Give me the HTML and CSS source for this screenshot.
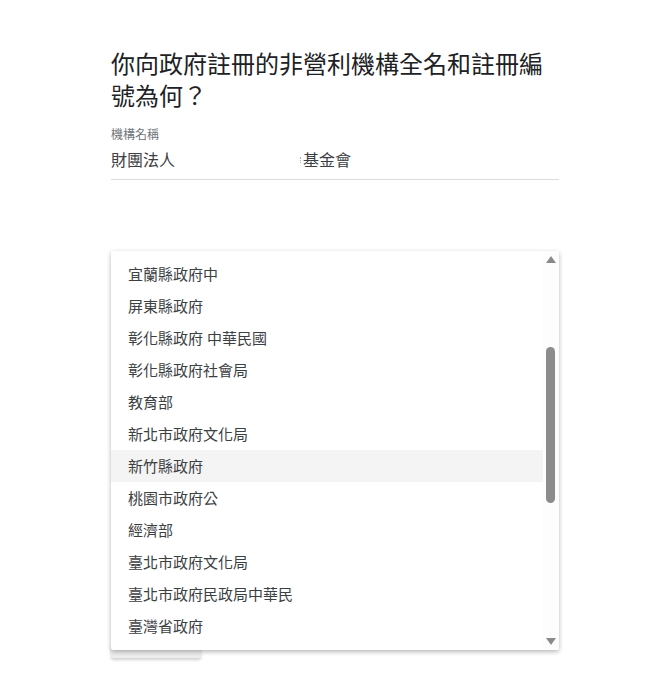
FILE: index.html
```html
<!DOCTYPE html>
<html lang="zh-Hant">
<head>
<meta charset="utf-8">
<link rel="stylesheet" href="styles.css">
</head>
<body>
<main class="page">
  <h1 class="title">你向政府註冊的非營利機構全名和註冊編號為何？</h1>
  <div class="field">
    <label class="label">機構名稱</label>
    <div class="input">
      <span class="part">財團法人</span>
      <span class="caret"></span>
      <span class="part">基金會</span>
    </div>
  </div>
  <div class="peek"></div>
  <div class="listbox">
    <ul class="options">
      <li class="opt">宜蘭縣政府中</li>
      <li class="opt">屏東縣政府</li>
      <li class="opt">彰化縣政府 中華民國</li>
      <li class="opt">彰化縣政府社會局</li>
      <li class="opt">教育部</li>
      <li class="opt">新北市政府文化局</li>
      <li class="opt active">新竹縣政府</li>
      <li class="opt">桃園市政府公</li>
      <li class="opt">經濟部</li>
      <li class="opt">臺北市政府文化局</li>
      <li class="opt">臺北市政府民政局中華民</li>
      <li class="opt">臺灣省政府</li>
    </ul>
    <div class="scrollbar">
      <span class="arrow up"></span>
      <span class="thumb"></span>
      <span class="arrow down"></span>
    </div>
  </div>
</main>
</body>
</html>
```
FILE: styles.css
```css
* { box-sizing: border-box; }
html, body { margin: 0; padding: 0; background: #fff; }
body {
  font-family: "Noto Sans", "Noto Sans CJK TC", sans-serif;
  color: #202124;
}
.page {
  position: relative;
  width: 652px;
  height: 692px;
  padding: 48px 0 0 111px;
}
.title {
  margin: 0;
  width: 448px;
  font-size: 24px;
  line-height: 32px;
  font-weight: 400;
  color: #202124;
}
.field {
  width: 448px;
  margin-top: 15px;
}
.label {
  display: block;
  font-size: 12px;
  line-height: 16px;
  color: #70757a;
}
.input {
  display: flex;
  align-items: center;
  height: 37px;
  padding: 6px 0 8px 0;
  line-height: 22px;
  border-bottom: 1px solid #dadce0;
  font-size: 16px;
  color: #3c4043;
}
.caret {
  width: 1px;
  height: 6px;
  margin-left: 125px;
  margin-right: 2px;
  border-left: 1px dotted #b0b0b0;
}
.peek {
  position: absolute;
  left: 111px;
  top: 644px;
  width: 90px;
  height: 14px;
  background: #ededed;
  border-radius: 2px;
  box-shadow: 0 2px 3px rgba(0,0,0,0.18);
}
.listbox {
  position: absolute;
  left: 111px;
  top: 251px;
  width: 448px;
  height: 399px;
  background: #fff;
  border-radius: 2px;
  box-shadow: 0 2px 4px rgba(0,0,0,0.22), 0 1px 6px rgba(0,0,0,0.08);
  display: flex;
  overflow: hidden;
}
.options {
  list-style: none;
  margin: 0;
  padding: 7px 0 0 0;
  flex: 1;
}
.opt {
  height: 32px;
  line-height: 32px;
  padding-left: 17px;
  font-size: 15px;
  color: #3c4043;
  white-space: nowrap;
}
.opt.active { background: #f4f4f4; }
.scrollbar {
  width: 16px;
  position: relative;
  background: #fdfdfd;
}
.arrow {
  position: absolute;
  left: 3px;
  width: 0;
  height: 0;
  border-left: 5px solid transparent;
  border-right: 5px solid transparent;
}
.arrow.up { top: 5px; border-bottom: 7px solid #8a8a8a; }
.arrow.down { bottom: 5px; border-top: 7px solid #8a8a8a; }
.thumb {
  position: absolute;
  left: 3px;
  top: 96px;
  width: 9px;
  height: 156px;
  border-radius: 5px;
  background: #8c8c8c;
}
```
